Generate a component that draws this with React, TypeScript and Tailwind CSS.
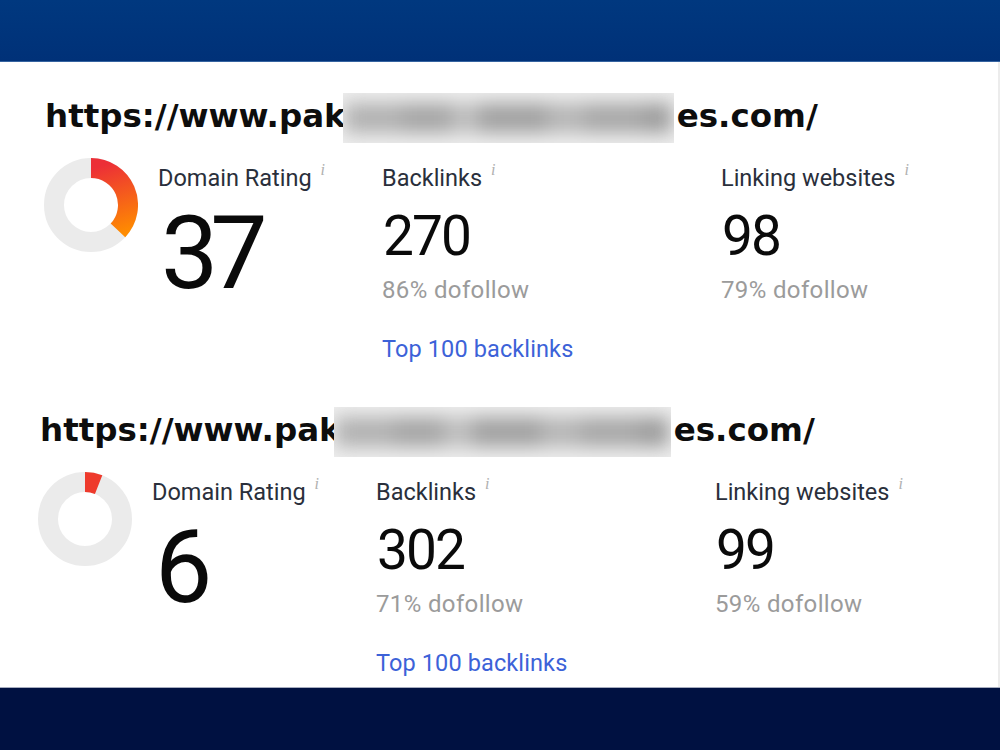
import React from "react";

type Metric = {
  url: [string, string];
  rating: number;
  backlinks: string;
  backlinksDofollow: string;
  linking: string;
  linkingDofollow: string;
  blurWidth: number;
  blurShift: string;
};

const SITES: Metric[] = [
  {
    url: ["https://www.pak", "es.com/"],
    rating: 37,
    backlinks: "270",
    backlinksDofollow: "86% dofollow",
    linking: "98",
    linkingDofollow: "79% dofollow",
    blurWidth: 331,
    blurShift: "-ml-[3px]",
  },
  {
    url: ["https://www.pak", "es.com/"],
    rating: 6,
    backlinks: "302",
    backlinksDofollow: "71% dofollow",
    linking: "99",
    linkingDofollow: "59% dofollow",
    blurWidth: 337,
    blurShift: "-ml-[7px]",
  },
];

// widths and tones of the smudges inside the redaction box
const SMUDGES: [number, string][] = [
  [60, "bg-[#b2b2b2]"],
  [50, "bg-[#a6a6a6]"],
  [30, "bg-[#bdbdbd]"],
  [70, "bg-[#a2a2a2]"],
  [40, "bg-[#b6b6b6]"],
  [60, "bg-[#a8a8a8]"],
  [30, "bg-[#9e9e9e]"],
];

function Redacted({ width, shift }: { width: number; shift: string }) {
  return (
    <div
      className={
        "relative z-10 mt-[4px] flex h-[50px] shrink-0 items-center overflow-hidden bg-[#eeeeee] " + shift
      }
      style={{ width }}
    >
      <div className="flex h-[30px] w-full items-center px-[2px] blur-[9px]">
        {SMUDGES.map(([w, c], i) => (
          <span key={i} className={"h-[30px] grow " + c} style={{ flexBasis: w }} />
        ))}
      </div>
    </div>
  );
}

function Donut({ value }: { value: number }) {
  const cx = 47;
  const cy = 47;
  const r = 37;
  const a = (value / 100) * Math.PI * 2;
  const x = cx + r * Math.sin(a);
  const y = cy - r * Math.cos(a);
  const large = value > 50 ? 1 : 0;
  const id = `dr-grad-${value}`;
  return (
    <svg width="94" height="94" viewBox="0 0 94 94" className="shrink-0">
      <defs>
        <linearGradient id={id} x1="50" y1="10" x2="72" y2="78" gradientUnits="userSpaceOnUse">
          <stop offset="0" stopColor="#ec2f37" />
          <stop offset="1" stopColor="#ff8c00" />
        </linearGradient>
      </defs>
      <circle cx={cx} cy={cy} r={r} fill="none" stroke="#ebebeb" strokeWidth="20" />
      <path
        d={`M ${cx} ${cy - r} A ${r} ${r} 0 ${large} 1 ${x.toFixed(2)} ${y.toFixed(2)}`}
        fill="none"
        stroke={value < 10 ? "#ee3a2c" : `url(#${id})`}
        strokeWidth="20"
      />
    </svg>
  );
}

function Info() {
  return (
    <span className="ml-[9px] -mt-[1px] text-[16px] leading-[16px] italic text-[#b0b0b0] [font-family:'Liberation_Serif',serif]">
      i
    </span>
  );
}

function Label({ children }: { children: React.ReactNode }) {
  return (
    <div className="flex items-start">
      <span className="text-[23.5px] leading-[30px] text-[#2a2f3b]">{children}</span>
      <Info />
    </div>
  );
}

function Site({ site, first }: { site: Metric; first: boolean }) {
  return (
    <section className={first ? "pl-[44px]" : "mt-[39px] pl-[38px]"}>
      <div
        className={
          "flex h-[54px] items-start text-[32.5px] font-bold leading-[54px] text-[#0d0d0d] [font-family:'DejaVu_Sans',sans-serif] " +
          (first ? "pl-[1px]" : "pl-[2px]")
        }
      >
        <span className="whitespace-nowrap">{site.url[0]}</span>
        <Redacted width={site.blurWidth} shift={site.blurShift} />
        <span className="ml-[3px] whitespace-nowrap">{site.url[1]}</span>
      </div>

      <div className="mt-[15px] flex items-start">
        <Donut value={site.rating} />

        <div className="ml-[20px] w-[224px] pt-[5px]">
          <Label>Domain Rating</Label>
          <div className="mt-[9px] pl-[3px] text-[102px] leading-[102px] tracking-[-0.08em] text-[#0a0a0a]">
            {site.rating}
          </div>
        </div>

        <div className="w-[339px] pt-[5px]">
          <Label>Backlinks</Label>
          <div className="mt-[16px] pl-[1px] text-[55px] leading-[55px] tracking-[-0.035em] text-[#0a0a0a]">
            {site.backlinks}
          </div>
          <div className="mt-[11px] text-[24px] leading-[30px] tracking-[0.015em] text-[#9b9b9b]">
            {site.backlinksDofollow}
          </div>
          <a className="mt-[29px] block text-[23.5px] leading-[30px] tracking-[0.005em] text-[#3c62d8]">
            Top 100 backlinks
          </a>
        </div>

        <div className="pt-[5px]">
          <Label>Linking websites</Label>
          <div className="mt-[16px] pl-[1px] text-[55px] leading-[55px] tracking-[-0.035em] text-[#0a0a0a]">
            {site.linking}
          </div>
          <div className="mt-[11px] text-[24px] leading-[30px] tracking-[0.015em] text-[#9b9b9b]">
            {site.linkingDofollow}
          </div>
        </div>
      </div>
    </section>
  );
}

export default function App() {
  return (
    <div className="flex h-[750px] w-[1000px] flex-col overflow-hidden bg-white [font-family:Roboto,'Noto_Sans',sans-serif]">
      <header className="h-[62px] shrink-0 border-b border-[#3563a0] bg-gradient-to-b from-[#00387f] to-[#003178]" />
      <main className="flex-1 border-r-2 border-[#ececec] pt-[27px]">
        {SITES.map((s, i) => (
          <Site key={i} site={s} first={i === 0} />
        ))}
      </main>
      <footer className="h-[63px] shrink-0 border-t border-[#a7adbf] bg-[#001141]" />
    </div>
  );
}
